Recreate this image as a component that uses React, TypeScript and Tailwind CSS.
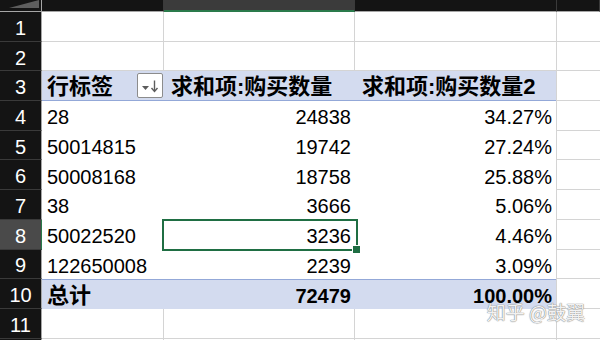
const COLS = ['A', 'B', 'C', 'D']

const data = [
  { n: 4, label: '28', qty: '24838', pct: '34.27%' },
  { n: 5, label: '50014815', qty: '19742', pct: '27.24%' },
  { n: 6, label: '50008168', qty: '18758', pct: '25.88%' },
  { n: 7, label: '38', qty: '3666', pct: '5.06%' },
  { n: 8, label: '50022520', qty: '3236', pct: '4.46%' },
  { n: 9, label: '122650008', qty: '2239', pct: '3.09%' },
]

function RowHead({ n, active }: { n: number; active?: boolean }) {
  return (
    <div
      className={`w-[42px] shrink-0 flex items-center justify-center pt-[3px] text-[20px] text-white border-b border-b-[#3a3a3a] border-r ${
        active ? 'bg-[#4a4a4a] border-r-[#2a7a4b]' : 'bg-[#141414] border-r-[#a6a6a6]'
      }`}
    >
      {n}
    </div>
  )
}

function FilterButton() {
  return (
    <div className="w-[26px] h-[25px] bg-white border border-[#8c8c8c] rounded-[2px] flex items-center justify-center">
      <svg width="20" height="14" viewBox="0 0 20 14" fill="none">
        <path d="M2 7h7l-3.5 4z" fill="#5c5c5c" />
        <path d="M14.5 1.5v10.5" stroke="#5c5c5c" strokeWidth="1.4" />
        <path d="M11.5 9l3 3.5 3-3.5" stroke="#5c5c5c" strokeWidth="1.4" fill="none" />
      </svg>
    </div>
  )
}

function EmptyRow({ n }: { n: number }) {
  return (
    <div className="flex h-[29.7px]">
      <RowHead n={n} />
      <div className="w-[122px] border-r border-b border-[#d4d4d4]" />
      <div className="w-[191px] border-r border-b border-[#d4d4d4]" />
      <div className="w-[202px] border-r border-b border-[#d4d4d4]" />
      <div className="flex-1 border-b border-[#d4d4d4]" />
    </div>
  )
}

export default function App() {
  return (
    <div className="relative w-[600px] h-[340px] overflow-hidden bg-white text-black font-['Liberation_Sans','Noto_Sans_CJK_SC',sans-serif]">
      {/* column header strip, mostly scrolled out of view */}
      <div className="flex h-[12px]">
        <div className="w-[42px] shrink-0 bg-[#141414] border-r border-b border-[#a6a6a6] flex items-end justify-end pr-[2px] pb-[3px]">
          <svg width="30" height="8" viewBox="0 0 30 8">
            <path d="M0 8L30 0V8z" fill="#5e5e5e" />
          </svg>
        </div>
        {COLS.map((c) => {
          const w = c === 'A' ? 'w-[122px]' : c === 'B' ? 'w-[191px]' : c === 'C' ? 'w-[202px]' : 'flex-1'
          const sel = c === 'B'
          return (
            <div
              key={c}
              className={`${w} overflow-hidden flex justify-center border-r border-r-[#3a3a3a] ${
                sel ? 'bg-[#3b3b3b] border-b-2 border-b-[#2a7a4b]' : 'bg-[#141414] border-b border-b-[#a6a6a6]'
              }`}
            >
              <span className="-mt-[14px] text-[15px] leading-[17px] text-white">{c}</span>
            </div>
          )
        })}
      </div>

      <EmptyRow n={1} />
      <EmptyRow n={2} />

      {/* pivot header */}
      <div className="flex h-[29.7px]">
        <RowHead n={3} />
        <div className="w-[514px] flex bg-[#d3dbef] border-b border-[#93a8d8] font-bold text-[22px]">
          <div className="w-[122px] flex items-center justify-between pl-[5px] pr-[1px]">
            <span className="pt-[2px]">行标签</span>
            <FilterButton />
          </div>
          <div className="w-[191px] flex items-center pl-[7px] pt-[2px]">求和项:购买数量</div>
          <div className="w-[201px] flex items-center pl-[7px] pt-[2px]">求和项:购买数量2</div>
        </div>
        <div className="flex-1 border-l border-b border-[#d4d4d4]" />
      </div>

      {data.map((r) => (
        <div key={r.n} className="flex h-[29.7px] text-[20px]">
          <RowHead n={r.n} active={r.n === 8} />
          <div className="w-[122px] flex items-center pl-[5px] pt-[3px]">{r.label}</div>
          <div className="relative w-[191px] flex items-center justify-end pr-[4px] pt-[3px]">
            {r.qty}
            {r.n === 8 && (
              <div className="absolute -left-[2px] -top-[1px] -right-[3px] -bottom-[1px] border-2 border-[#1f6e43]">
                <div className="absolute -right-[5px] -bottom-[5px] w-[9px] h-[9px] bg-[#1f6e43] border border-white" />
              </div>
            )}
          </div>
          <div className="w-[202px] flex items-center justify-end pr-[4px] pt-[3px] border-r border-[#d4d4d4]">
            {r.pct}
          </div>
          <div className="flex-1 border-b border-[#d4d4d4]" />
        </div>
      ))}

      {/* grand total */}
      <div className="flex h-[29.7px]">
        <RowHead n={10} />
        <div className="w-[514px] flex bg-[#d3dbef] border-t border-[#93a8d8] font-bold">
          <div className="w-[122px] flex items-center pl-[5px] pt-[2px] text-[22px]">总计</div>
          <div className="w-[191px] flex items-center justify-end pr-[4px] pt-[3px] text-[20px]">72479</div>
          <div className="w-[201px] flex items-center justify-end pr-[4px] pt-[3px] text-[20px]">100.00%</div>
        </div>
        <div className="flex-1 border-l border-b border-[#d4d4d4]" />
      </div>

      <EmptyRow n={11} />
      <EmptyRow n={12} />

      {/* watermark */}
      <div className="absolute right-[15px] bottom-[14px] text-[19px] text-white/90 font-['Noto_Sans_CJK_SC',sans-serif] [text-shadow:0_0_1px_#777,0_0_1px_#777]">
        知乎 @鼓翼
      </div>
    </div>
  )
}
